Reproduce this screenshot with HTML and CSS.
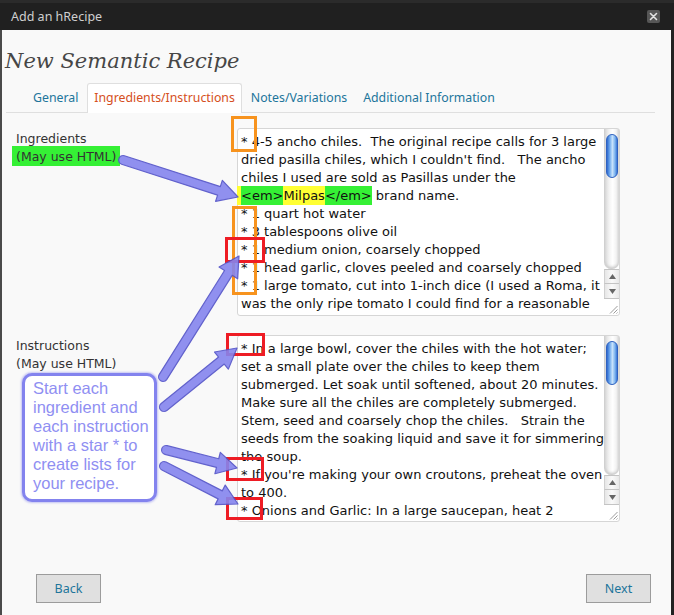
FILE: index.html
```html
<!DOCTYPE html>
<html lang="en">
<head>
<meta charset="utf-8">
<title>Add an hRecipe</title>
<link rel="stylesheet" href="styles.css">
</head>
<body>
<div class="window">
  <div class="titlebar">
    <span class="title">Add an hRecipe</span>
    <span class="close"><svg width="13" height="13" viewBox="0 0 13 13"><path d="M3.5 3.5 L9.5 9.5 M9.5 3.5 L3.5 9.5" stroke="#e2e2e2" stroke-width="1.6" stroke-linecap="round"/></svg></span>
  </div>
  <div class="dialog">
    <h1 class="heading">New Semantic Recipe</h1>
    <ul class="tabs">
      <li class="tab">General</li>
      <li class="tab active">Ingredients/Instructions</li>
      <li class="tab">Notes/Variations</li>
      <li class="tab">Additional Information</li>
    </ul>

    <div class="field">
      <div class="label">Ingredients<br><span class="hl-green">(May use HTML)</span></div>
      <div class="textarea">
        <div class="ta-text">* 4-5 ancho chiles.  The original recipe calls for 3 large
dried pasilla chiles, which I couldn't find.   The ancho
chiles I used are sold as Pasillas under the
<span class="hl-yellow"><span class="hl-tag">&lt;em&gt;</span>Milpas<span class="hl-tag">&lt;/em&gt;</span></span> brand name.
* 1 quart hot water
* 3 tablespoons olive oil
* 1 medium onion, coarsely chopped
* 1 head garlic, cloves peeled and coarsely chopped
* 1 large tomato, cut into 1-inch dice (I used a Roma, it
was the only ripe tomato I could find for a reasonable</div>
        <div class="scrollbar">
          <div class="sb-track"><div class="sb-thumb"></div></div>
          <div class="sb-btn"><svg width="9" height="7" viewBox="0 0 9 7"><path d="M4.5 1 L8 6 L1 6 Z" fill="#666"/></svg></div>
          <div class="sb-btn"><svg width="9" height="7" viewBox="0 0 9 7"><path d="M1 1 L8 1 L4.5 6 Z" fill="#666"/></svg></div>
          <div class="sb-corner"><svg width="9" height="9" viewBox="0 0 9 9"><path d="M1 8.5 L8.5 1 M4.5 8.5 L8.5 4.5 M7.5 8.5 L8.5 7.5" stroke="#9a9a9a" stroke-width="1"/></svg></div>
        </div>
      </div>
    </div>

    <div class="field field-second">
      <div class="label">Instructions<br>(May use HTML)</div>
      <div class="textarea textarea-second">
        <div class="ta-text">* In a large bowl, cover the chiles with the hot water;
set a small plate over the chiles to keep them
submerged. Let soak until softened, about 20 minutes.
Make sure all the chiles are completely submerged.
Stem, seed and coarsely chop the chiles.   Strain the
seeds from the soaking liquid and save it for simmering
the soup.
* If you're making your own croutons, preheat the oven
to 400.
* Onions and Garlic: In a large saucepan, heat 2</div>
        <div class="scrollbar">
          <div class="sb-track"><div class="sb-thumb"></div></div>
          <div class="sb-btn"><svg width="9" height="7" viewBox="0 0 9 7"><path d="M4.5 1 L8 6 L1 6 Z" fill="#666"/></svg></div>
          <div class="sb-btn"><svg width="9" height="7" viewBox="0 0 9 7"><path d="M1 1 L8 1 L4.5 6 Z" fill="#666"/></svg></div>
          <div class="sb-corner"><svg width="9" height="9" viewBox="0 0 9 9"><path d="M1 8.5 L8.5 1 M4.5 8.5 L8.5 4.5 M7.5 8.5 L8.5 7.5" stroke="#9a9a9a" stroke-width="1"/></svg></div>
        </div>
      </div>
    </div>

    <div class="footer">
      <button class="btn">Back</button>
      <button class="btn">Next</button>
    </div>
  </div>

  <div class="callout">Start each<br>ingredient and<br>each instruction<br>with a star * to<br>create lists for<br>your recipe.</div>

  <svg class="annotations" width="674" height="615" viewBox="0 0 674 615">
    <g fill="none" stroke-width="3">
      <rect x="232.5" y="117.5" width="23" height="33" stroke="#f7931e"/>
      <rect x="233.5" y="207.5" width="22" height="86" stroke="#f7931e"/>
      <rect x="226.5" y="238.5" width="37" height="23" stroke="#ee1c24"/>
      <rect x="227.5" y="334.5" width="36" height="20" stroke="#ee1c24"/>
      <rect x="227.5" y="458.5" width="35" height="21" stroke="#ee1c24"/>
      <rect x="227.5" y="498.5" width="34" height="20" stroke="#ee1c24"/>
    </g>
    <g class="arrows" fill="#8585ee" stroke="#5252c8" stroke-width="1.2" stroke-linejoin="round" opacity="0.9">
      <path d="M124.38 155.72 L220.34 186.60 L222.33 180.41 L238 197 L215.59 201.35 L217.58 195.16 L121.62 164.28 A4.5 4.5 0 0 1 124.38 155.72 Z"/>
      <path d="M159.19 374.61 L224.55 270.55 L219.05 267.09 L239 256 L237.68 278.79 L232.17 275.33 L166.81 379.39 A4.5 4.5 0 0 1 159.19 374.61 Z"/>
      <path d="M161.17 403.50 L218.61 357.07 L214.53 352.01 L237 348 L228.36 369.13 L224.27 364.07 L166.83 410.50 A4.5 4.5 0 0 1 161.17 403.50 Z"/>
      <path d="M167.11 445.64 L218.72 458.73 L220.31 452.43 L237 468 L214.91 473.75 L216.50 467.45 L164.89 454.36 A4.5 4.5 0 0 1 167.11 445.64 Z"/>
      <path d="M166.06 462.00 L222.27 490.86 L225.24 485.08 L238 504 L215.19 504.65 L218.15 498.86 L161.94 470.00 A4.5 4.5 0 0 1 166.06 462.00 Z"/>
    </g>
  </svg>
</div>
</body>
</html>
```

FILE: styles.css
```css
* { box-sizing: border-box; }

body {
  margin: 0;
  background: #222;
  font-family: "DejaVu Sans", sans-serif;
}

.window {
  position: relative;
  width: 674px;
  height: 615px;
  background: #222;
  overflow: hidden;
  display: flex;
  flex-direction: column;
}

.titlebar {
  flex: none;
  height: 30px;
  border-top: 3px solid #2b2b2b;
  background: #202020;
  display: flex;
  align-items: center;
  justify-content: space-between;
  padding: 0 14px 0 11px;
}

.title {
  font: 12.5px/1 "Noto Sans", sans-serif;
  color: #cfcfcf;
  margin-top: 1px;
}

.close {
  width: 13px;
  height: 13px;
  background: #565656;
  border-radius: 2px;
  display: flex;
}

.dialog {
  flex: 1;
  background: #f9f9f9;
  margin-right: 3px;
  border-left: 2px solid #4a4a4a;
}

.heading {
  margin: 18px 0 0 3px;
  font: italic 21px/26px "DejaVu Serif", serif;
  font-weight: normal;
  color: #464646;
}

.tabs {
  list-style: none;
  margin: 9px 16px 0 4px;
  padding: 0 0 0 20px;
  height: 30px;
  border-bottom: 1px solid #dfdfdf;
  display: flex;
  align-items: flex-start;
}

.tab {
  height: 30px;
  margin-right: 2px;
  padding: 0 6px;
  border: 1px solid transparent;
  border-bottom: none;
  border-radius: 3px 3px 0 0;
  font: 12.3px/28px "Noto Sans", sans-serif;
  color: #21759b;
}

.tab.active {
  background: #fff;
  border-color: #dfdfdf;
  color: #d54e21;
}

.field {
  display: flex;
  margin: 15px 0 0 14px;
}

.field-second {
  margin-top: 19px;
}

.label {
  width: 221px;
  padding-top: 2px;
  font-size: 12.5px;
  line-height: 18px;
  color: #333;
}

.hl-green {
  background: #35f035;
  padding: 3px 4px 2px;
  margin-left: -4px;
}

.textarea {
  width: 383px;
  height: 188px;
  background: #fff;
  border: 1px solid #d6d6d6;
  border-radius: 3px;
  display: flex;
}

.textarea-second {
  height: 187px;
}

.ta-text {
  flex: 1;
  padding: 4px 0 0 3px;
  font-size: 13px;
  line-height: 18px;
  color: #111;
  white-space: pre;
}

.hl-yellow {
  background: #ffff33;
  padding: 2px 0 2px 4px;
  margin-left: -4px;
}

.hl-tag {
  background: #35f035;
  padding: 2px 0;
}

.scrollbar {
  width: 15px;
  display: flex;
  flex-direction: column;
}

.sb-track {
  flex: 1;
  padding: 5px 1px 0;
  background: linear-gradient(to right, #d9d9d9, #f3f3f3 30%, #fff 55%, #f2f2f2 80%, #d6d6d6);
  border-left: 1px solid #d0d0d0;
  border-radius: 0 0 7px 7px;
  box-shadow: inset 0 -3px 3px -1px #c8c8c8;
}

.sb-thumb {
  height: 44px;
  border-radius: 7px;
  border: 1px solid #2f62c0;
  background: linear-gradient(to right, #2f67cc 0%, #5f9de9 22%, #a9d0f7 45%, #c6e1fb 55%, #7cb4ef 80%, #3b76d6 100%);
}

.sb-btn {
  height: 14px;
  display: flex;
  align-items: center;
  justify-content: center;
  border-left: 1px solid #d0d0d0;
  border-top: 1px solid #c4c4c4;
  background: linear-gradient(to right, #e6e6e6, #fafafa 50%, #e8e8e8);
}

.sb-btn + .sb-btn {
  height: 15px;
}

.sb-corner {
  height: 17px;
  border-top: 1px solid #c4c4c4;
  display: flex;
  align-items: flex-end;
  justify-content: flex-end;
  padding: 0 1px 1px 0;
}

.footer {
  display: flex;
  justify-content: space-between;
  margin-top: 52px;
  padding: 0 20px 0 34px;
}

.btn {
  width: 65px;
  height: 29px;
  margin: 0;
  padding: 0;
  background: #e0e0e0;
  border: 1px solid #9c9c9c;
  border-radius: 0;
  font: 12.5px "Noto Sans", sans-serif;
  color: #21759b;
}

.callout {
  position: absolute;
  left: 22px;
  top: 373px;
  width: 135px;
  height: 129px;
  padding: 3px 0 0 8px;
  background: #fff;
  border: 3px solid #8383ee;
  border-radius: 10px;
  box-shadow: 0 0 2px 1px rgba(130, 130, 238, 0.45);
  font: 16.5px/19px "Liberation Sans", Arial, sans-serif;
  color: #8f8ff2;
}

.annotations {
  position: absolute;
  left: 0;
  top: 0;
  pointer-events: none;
}
```
